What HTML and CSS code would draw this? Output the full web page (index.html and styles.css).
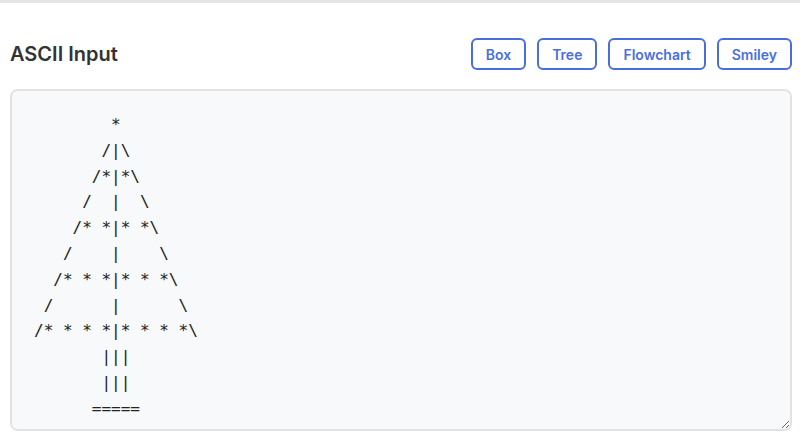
FILE: index.html
```html
<!DOCTYPE html>
<html lang="en">
<head>
  <meta charset="UTF-8" />
  <meta name="viewport" content="width=device-width, initial-scale=1" />
  <title>ASCII Input</title>
  <link rel="stylesheet" href="styles.css" />
</head>
<body>
  <!-- Top rule left over from the panel above -->
  <div class="top-rule"></div>

  <section class="input-panel">
    <div class="panel-header">
      <h2>ASCII Input</h2>
      <div class="presets">
        <button class="preset-btn">Box</button>
        <button class="preset-btn">Tree</button>
        <button class="preset-btn">Flowchart</button>
        <button class="preset-btn">Smiley</button>
      </div>
    </div>

    <textarea class="ascii-input" spellcheck="false">        *
       /|\
      /*|*\
     /  |  \
    /* *|* *\
   /    |    \
  /* * *|* * *\
 /      |      \
/* * * *|* * * *\
       |||
       |||
      =====</textarea>
  </section>
</body>
</html>
```

FILE: styles.css
```css
/* Global */
body {
  margin: 0;
  background: #FFF;
  font-family: Inter, 'Liberation Sans', sans-serif;
  color: #333;
}

.top-rule {
  height: 3px;
  background: #E4E4E4;
}

/* Panel */
.input-panel {
  padding: 0 8px 0 10px;
}
.panel-header {
  display: flex;
  align-items: center;
  justify-content: space-between;
  height: 32px;
  margin-top: 35px;
  margin-bottom: 19px;
}
.panel-header h2 {
  margin: 0;
  font-size: 20px;
  font-weight: 600;
  color: #333;
}

/* Preset buttons */
.presets {
  display: flex;
  gap: 11px;
}
.preset-btn {
  height: 32px;
  padding: 0 13px;
  background: #FFF;
  border: 2px solid #4A6FDC;
  border-radius: 6px;
  color: #4A6FDC;
  font-family: Inter, 'Liberation Sans', sans-serif;
  font-size: 14px;
  font-weight: 600;
  cursor: pointer;
}

/* Text area */
.ascii-input {
  display: block;
  box-sizing: border-box;
  width: 100%;
  height: 342px;
  padding: 21px 22px;
  background: #F8F9FA;
  border: 2px solid #E2E2E2;
  border-radius: 8px;
  font-family: 'DejaVu Sans Mono', monospace;
  font-size: 16px;
  line-height: 25.8px;
  color: #222;
  resize: vertical;
  outline: none;
}
```
